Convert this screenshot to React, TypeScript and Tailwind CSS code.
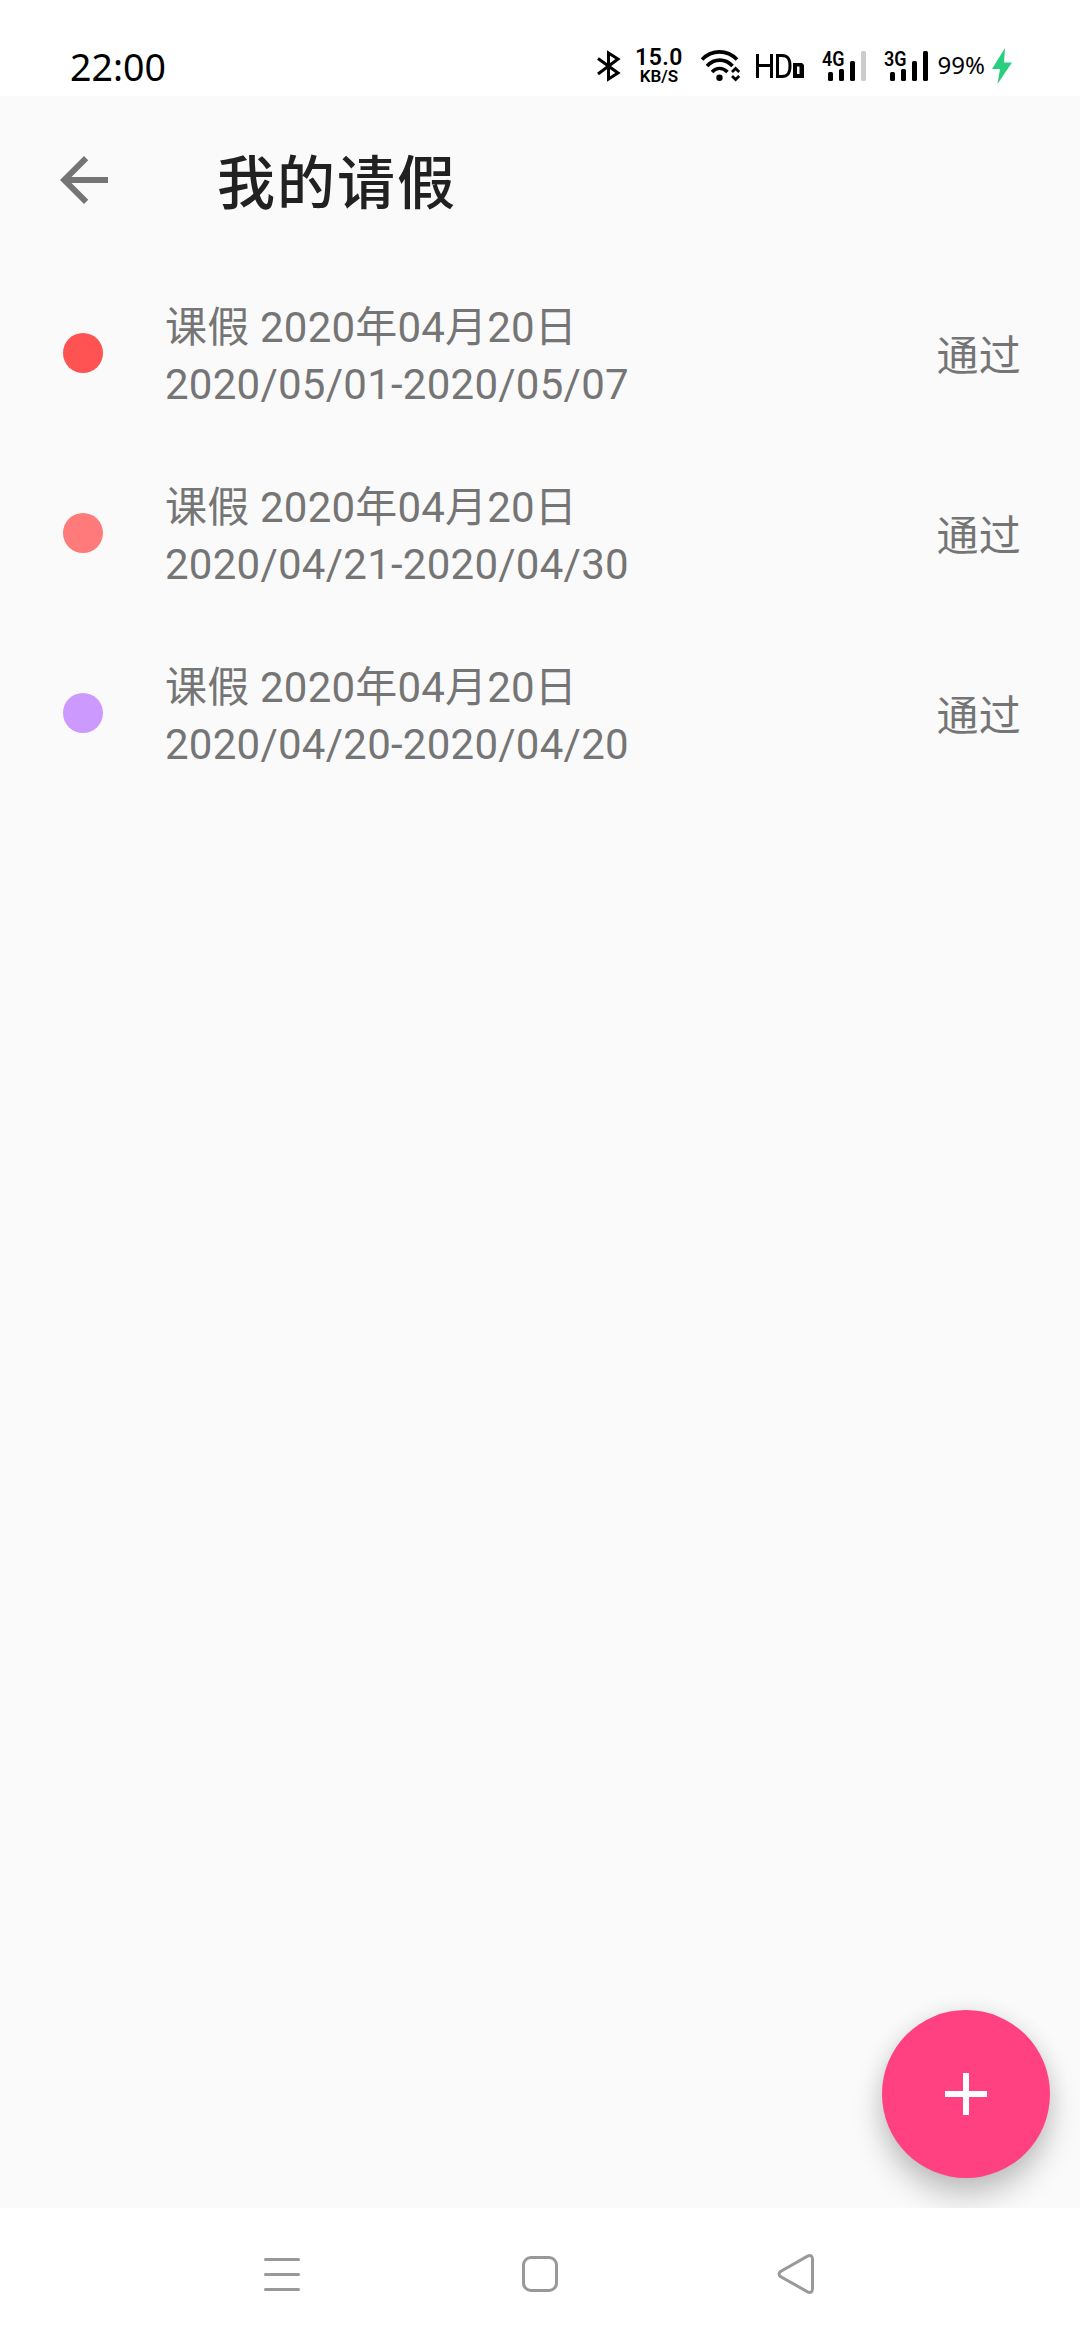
type Leave = { color: string; title: string; range: string; status: string };

const leaves: Leave[] = [
  { color: "bg-[#ff5252]", title: "课假 2020年04月20日", range: "2020/05/01-2020/05/07", status: "通过" },
  { color: "bg-[#ff7a7a]", title: "课假 2020年04月20日", range: "2020/04/21-2020/04/30", status: "通过" },
  { color: "bg-[#cc99ff]", title: "课假 2020年04月20日", range: "2020/04/20-2020/04/20", status: "通过" },
];

function Signal({ label, faded }: { label: string; faded?: boolean }) {
  return (
    <svg className="h-[32px] w-[45px] overflow-visible" viewBox="0 0 45 32">
      <text x="0" y="15.500" fontSize="20" fontWeight="600" textLength="22.500" lengthAdjust="spacingAndGlyphs" className="font-['Roboto',sans-serif]">
        {label}
      </text>
      <rect x="6" y="22" width="5" height="9" rx="1.5" />
      <rect x="17" y="19" width="5" height="12" rx="1.5" />
      <rect x="28" y="11" width="5" height="20" rx="1.5" />
      <rect x="39" y="1" width="5" height="30" rx="1.5" fill={faded ? "#cccccc" : "#000000"} />
    </svg>
  );
}

function StatusBar() {
  return (
    <header className="flex h-[96px] items-start bg-white text-black">
      <span className="mt-[40px] ml-[70px] w-[119px] font-['Noto_Sans',sans-serif] text-[37.5px] leading-[54px]">22:00</span>
      <svg className="mt-[50px] ml-[406px] h-[32px] w-[26px]" viewBox="0 0 26 32" fill="none" stroke="#000" strokeWidth="3">
        <path d="M3 8.500 23 23 13.500 29V3L23 9 3 24" />
      </svg>
      <div className="mt-[47px] ml-[13px] flex w-[50px] flex-col items-center font-['Roboto',sans-serif] font-semibold">
        <span className="text-[23px] leading-[21px] tracking-[0.5px]">15.0</span>
        <span className="text-[17px] leading-[17px]">KB/S</span>
      </div>
      <svg className="mt-[49px] ml-[16px] h-[34px] w-[42px]" viewBox="0 0 42 34" fill="none" stroke="#000" strokeWidth="3.600">
        <path d="M2 10.500C12 .3 27 .3 37 10.500M7 17C14.500 9.200 25 9.200 32.500 17M12 23C16.500 18.300 22.500 18.300 27.500 23" />
        <circle cx="19.500" cy="28.700" r="3.200" fill="#000" stroke="none" />
        <path d="M32 23 35.600 19.500 39.200 23M32 27 35.600 30.500 39.200 27" strokeWidth="2.800" />
      </svg>
      <svg className="mt-[52px] ml-[14px] h-[28px] w-[52px]" viewBox="0 0 52 28" fill="none" stroke="#000" strokeWidth="3">
        <path d="M1.500 2V26M15.500 2V26M1.500 13.500H15.500M21.500 3.500V24.500H26C32 24.500 34 21 34 14S32 3.500 26 3.500Z" />
        <path d="M37 11H46L48 13V26H37Z" fill="#000" stroke="none" />
        <path d="M41 14.500H43.500V22H41Z" fill="#fff" stroke="none" />
      </svg>
      <div className="mt-[50px] ml-[14px] flex">
        <Signal label="4G" faded />
        <div className="ml-[17px] flex">
          <Signal label="3G" />
        </div>
      </div>
      <span className="mt-[49px] ml-[8.5px] w-[52px] font-['Noto_Sans',sans-serif] text-[24px] leading-[32px]">99%</span>
      <svg className="mt-[48px] ml-[2px] h-[36px] w-[20px]" viewBox="0 0 20 36">
        <path d="M13 0 0 21H8L5.500 36 20 14.500H12Z" fill="#29cf7f" />
      </svg>
    </header>
  );
}

export default function App() {
  return (
    <div className="flex h-[2340px] w-[1080px] flex-col overflow-hidden bg-[#fafafa]">
      <StatusBar />
      <div className="flex h-[168px] items-center">
        <button aria-label="返回" className="ml-[60px] h-[48px] w-[48px]">
          <svg viewBox="0 0 48 48" className="h-full w-full">
            <path d="M48 21H11.500L28.250 4.250 24 0 0 24 24 48 28.250 43.750 11.500 27H48Z" fill="#757575" />
          </svg>
        </button>
        <h1 className="mt-[8px] ml-[109px] font-['Roboto','Noto_Sans_CJK_SC',sans-serif] text-[58px] leading-[84px] font-medium tracking-[2px] text-[#212121]">我的请假</h1>
      </div>
      <main className="flex flex-1 flex-col font-['Roboto','Noto_Sans_CJK_SC',sans-serif] text-[42px] tracking-[0.2px] text-[#757575]">
        {leaves.map((leave) => (
          <div key={leave.range} className="flex h-[180px] items-center">
            <span className={`-mt-[2px] ml-[63px] h-[40px] w-[40px] rounded-full ${leave.color}`} />
            <div className="mt-[4px] ml-[62px] flex-1 leading-[57px] whitespace-nowrap">
              <p>{leave.title}</p>
              <p className="tracking-[0.25px]">{leave.range}</p>
            </div>
            <span className="mt-[4px] mr-[59px] leading-[57px]">{leave.status}</span>
          </div>
        ))}
        <div className="mt-auto flex overflow-hidden pt-[40px] pb-[30px]">
          <button aria-label="添加" className="mr-[30px] ml-auto flex h-[168px] w-[168px] items-center justify-center rounded-full bg-[#ff4081] shadow-[0_18px_30px_rgba(0,0,0,0.22),0_0_22px_rgba(0,0,0,0.07)]">
            <svg className="h-[42px] w-[42px]" viewBox="0 0 42 42" stroke="#fff" strokeWidth="6">
              <path d="M21 0V42M0 21H42" />
            </svg>
          </button>
        </div>
      </main>
      <nav className="flex h-[132px] items-center bg-white">
        <svg className="ml-[264px] h-[40px] w-[36px]" viewBox="0 0 36 40" stroke="#999" strokeWidth="3" strokeLinecap="round">
          <path d="M1.500 5.500H34.500M1.500 20.500H34.500M1.500 35.500H34.500" />
        </svg>
        <span className="ml-[222px] h-[36px] w-[36px] rounded-[9px] border-[3px] border-[#999]" />
        <svg className="ml-[219px] h-[40px] w-[38px]" viewBox="0 0 38 40" fill="none" stroke="#999" strokeWidth="3">
          <path d="M3.500 17.500 30.500 2.200Q35.200.200 35.500 5V35Q35.200 39.800 30.500 37.800L3.500 22.500Q.600 20 3.500 17.500Z" />
        </svg>
      </nav>
    </div>
  );
}
